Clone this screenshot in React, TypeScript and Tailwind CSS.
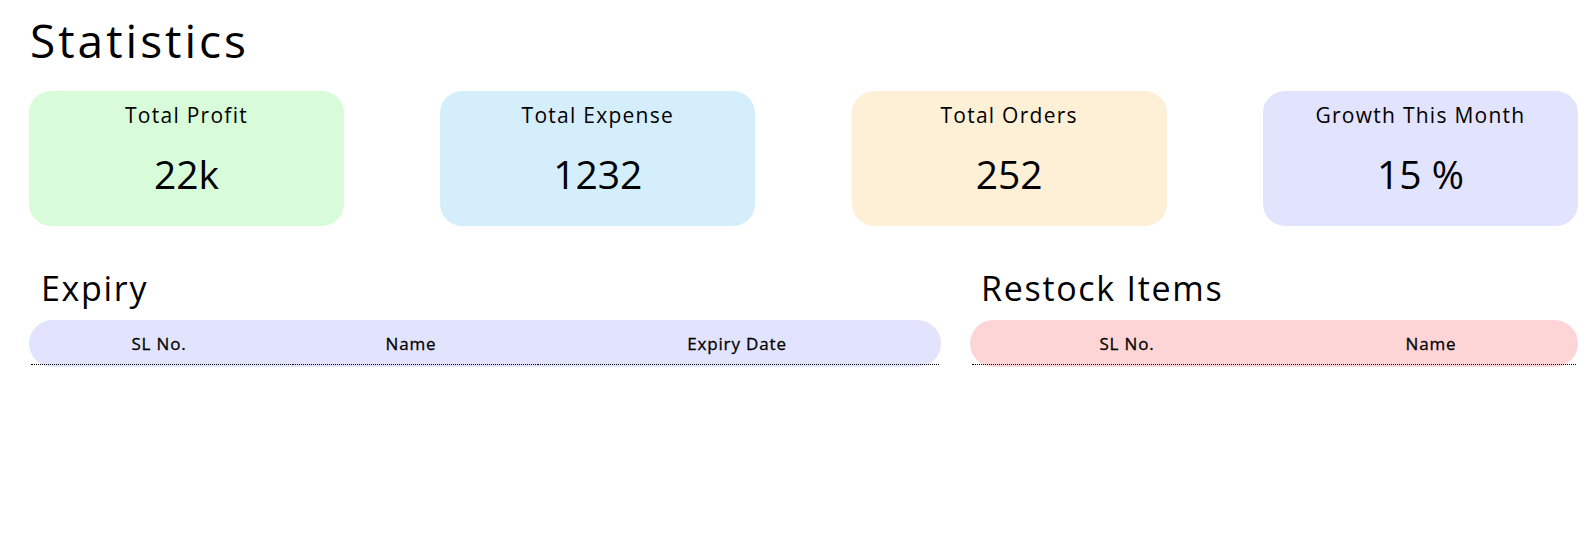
const stats = [
  { title: "Total Profit", value: "22k", bg: "bg-[#d8fcd9]" },
  { title: "Total Expense", value: "1232", bg: "bg-[#d5eefc]" },
  { title: "Total Orders", value: "252", bg: "bg-[#fef0d7]" },
  { title: "Growth This Month", value: "15 %", bg: "bg-[#e2e3fd]" },
];

function StatCard({ title, value, bg }: { title: string; value: string; bg: string }) {
  return (
    <div className={`flex h-[135px] w-[315px] flex-col items-center rounded-[22px] ${bg}`}>
      <div className="mt-[9px] text-[21px] leading-[30px] tracking-[0.06em]">{title}</div>
      <div className="mt-[20px] text-[39px] leading-[48px]">{value}</div>
    </div>
  );
}

function TableHead({ cols, widths, bg }: { cols: string[]; widths: string; bg: string }) {
  return (
    <div>
      <div className={`grid h-[47px] items-center rounded-[24px] ${widths} ${bg}`}>
        {cols.map((c) => (
          <div key={c} className="text-center text-[17px] tracking-[0.05em] [-webkit-text-stroke:0.3px_black]">
            {c}
          </div>
        ))}
      </div>
      <div className={`-mt-[3px] grid gap-px px-[2px] ${widths}`}>
        {cols.map((c) => (
          <div key={c} className="border-b border-dotted border-black" />
        ))}
      </div>
    </div>
  );
}

export default function App() {
  return (
    <div className="min-h-[533px] bg-white pb-10 pl-[29px] pr-[14px] pt-[10px] font-['Open_Sans',sans-serif] text-black">
      <h1 className="pl-[1px] text-[46px] leading-[60px] tracking-[0.065em]">Statistics</h1>

      <div className="mt-[21px] flex justify-between">
        {stats.map((s) => (
          <StatCard key={s.title} {...s} />
        ))}
      </div>

      <div className="mt-[37px] grid grid-cols-[3fr_2fr] gap-[29px]">
        <section>
          <h2 className="pl-[12px] text-[34px] leading-[50px] tracking-[0.05em]">Expiry</h2>
          <div className="mt-[7px]">
            <TableHead
              cols={["SL No.", "Name", "Expiry Date"]}
              widths="grid-cols-[260px_244px_1fr]"
              bg="bg-[#e2e3fd]"
            />
          </div>
        </section>
        <section>
          <h2 className="pl-[11px] text-[34px] leading-[50px] tracking-[0.05em]">Restock Items</h2>
          <div className="mt-[7px]">
            <TableHead
              cols={["SL No.", "Name"]}
              widths="grid-cols-[314px_1fr]"
              bg="bg-[#fdd5d6]"
            />
          </div>
        </section>
      </div>
    </div>
  );
}
